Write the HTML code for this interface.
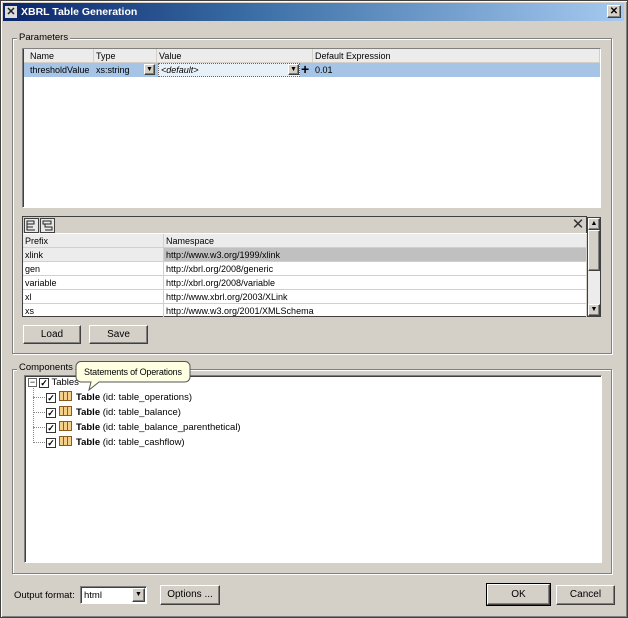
<!DOCTYPE html>
<html><head><style>
*{box-sizing:border-box;margin:0;padding:0}
body{width:628px;height:618px;background:#fff;font-family:"Liberation Sans",Arial,sans-serif;font-size:10px;color:#000;position:relative;overflow:hidden}
.a{position:absolute}
.win{left:0;top:0;width:628px;height:618px;background:#d4d0c8;border:1px solid #404040;box-shadow:inset 1px 1px #fff,inset -1px -1px #808080}
.title{left:3px;top:3px;width:621px;height:18px;background:linear-gradient(90deg,#0a246a,#3a6ea5 40%,#a6caf0);color:#fff;font-weight:bold;font-size:10.5px;line-height:18px;padding-left:18px}
.grp{border:1px solid #808080;box-shadow:1px 1px #fff,inset 1px 1px #fff}
.lbl{background:#d4d0c8;padding:0 2px;font-size:9.5px}
.sunk{background:#fff;border:1px solid;border-color:#808080 #fff #fff #808080;box-shadow:inset 1px 1px #404040}
.btn{background:#d4d0c8;border:1px solid;border-color:#fff #404040 #404040 #fff;box-shadow:inset -1px -1px #808080;text-align:center;font-size:10px}
.cell{position:absolute;height:14px;line-height:14px;padding-left:2px;white-space:nowrap;font-size:9px;border-right:1px solid #d4d0c8;border-bottom:1px solid #d4d0c8}
.hdr{background:#ececec}
.tr{position:absolute;left:0;font-size:9.5px;white-space:nowrap;line-height:12px}
.cb{display:inline-block;width:10px;height:10px;border:1px solid #333;background:#fff;vertical-align:-1px;font-size:9px;line-height:8px;text-align:center;font-weight:bold}
.tbl{display:inline-block;width:13px;height:10px;border:1px solid #8a5a20;background:repeating-linear-gradient(90deg,#f4d08a 0 3px,#8a5a20 3px 4px);vertical-align:-1px;margin:0 4px 0 3px}
</style></head><body>
<div class="a win"></div>
<div class="a title">XBRL Table Generation</div>
<div class="a" style="left:5px;top:6px;width:12px;height:12px;background:#ddd;color:#222;font-size:11px;font-weight:bold;line-height:12px;text-align:center">✕</div>
<div class="a btn" style="left:607px;top:5px;width:14px;height:13px;line-height:11px;font-weight:bold;font-size:10px">✕</div>

<div class="a grp" style="left:12px;top:38px;width:600px;height:316px"></div>
<div class="a lbl" style="left:17px;top:32px">Parameters</div>
<div class="a sunk" style="left:22px;top:48px;width:579px;height:160px"></div>
<div class="a" style="left:24px;top:50px;width:576px;height:13px;background:#ececec"></div>
<div class="a" style="left:24px;top:63px;width:576px;height:14px;background:#a6c4e6"></div>
<div class="cell hdr" style="left:24px;top:49px;width:70px;padding-left:6px">Name</div>
<div class="cell hdr" style="left:94px;top:49px;width:63px">Type</div>
<div class="cell hdr" style="left:157px;top:49px;width:156px">Value</div>
<div class="cell hdr" style="left:313px;top:49px;width:287px">Default Expression</div>
<div class="cell" style="left:24px;top:63px;width:70px;border:0;padding-left:6px">thresholdValue</div>
<div class="cell" style="left:94px;top:63px;width:63px;border:0">xs:string</div>
<div class="a btn" style="left:144px;top:64px;width:11px;height:11px;font-size:7px;line-height:9px">▼</div>
<div class="a" style="left:158px;top:63px;width:142px;height:14px;background:#e8f0f8;border:1px dotted #666;font-size:9px;font-style:italic;line-height:12px;padding-left:2px">&lt;default&gt;</div>
<div class="a btn" style="left:288px;top:64px;width:11px;height:11px;font-size:7px;line-height:9px">▼</div>
<div class="a" style="left:301px;top:62px;font-size:14px;font-weight:bold;line-height:14px">+</div>
<div class="cell" style="left:313px;top:63px;border:0">0.01</div>

<div class="a" style="left:22px;top:216px;width:565px;height:18px;border:1px solid #404040;background:#d4d0c8"></div>
<svg class="a" style="left:24px;top:218px" width="32" height="15"><rect x=".5" y=".5" width="14" height="14" fill="#e8e8e8" stroke="#404040"/><rect x="16.5" y=".5" width="14" height="14" fill="#e8e8e8" stroke="#404040"/><path d="M3 3h7v3H3zM3 6v6h8M3 9h6" fill="none" stroke="#222"/><path d="M19 3h8v3h-8zM21 6v3h7v3h-7" fill="none" stroke="#222"/></svg>
<div class="a" style="left:570px;top:217px;width:16px;height:16px;font-size:15px;line-height:16px;text-align:center;color:#333">✕</div>
<div class="a" style="left:22px;top:233px;width:565px;height:84px;background:#fff;border-left:1px solid #404040;border-bottom:1px solid #404040"></div>
<div class="cell hdr" style="left:23px;top:234px;width:141px">Prefix</div>
<div class="cell hdr" style="left:164px;top:234px;width:423px">Namespace</div>
<div class="cell" style="left:23px;top:248px;width:141px;background:#ececec">xlink</div>
<div class="cell" style="left:164px;top:248px;width:423px;background:#c0c0c0">http://www.w3.org/1999/xlink</div>
<div class="cell" style="left:23px;top:262px;width:141px">gen</div>
<div class="cell" style="left:164px;top:262px;width:423px">http://xbrl.org/2008/generic</div>
<div class="cell" style="left:23px;top:276px;width:141px">variable</div>
<div class="cell" style="left:164px;top:276px;width:423px">http://xbrl.org/2008/variable</div>
<div class="cell" style="left:23px;top:290px;width:141px">xl</div>
<div class="cell" style="left:164px;top:290px;width:423px">http://www.xbrl.org/2003/XLink</div>
<div class="cell" style="left:23px;top:304px;width:141px">xs</div>
<div class="cell" style="left:164px;top:304px;width:423px">http://www.w3.org/2001/XMLSchema</div>
<div class="a" style="left:587px;top:217px;width:14px;height:100px;background:#ececec;border:1px solid #404040"></div>
<div class="a btn" style="left:588px;top:218px;width:12px;height:12px;font-size:7px;line-height:10px">▲</div>
<div class="a btn" style="left:588px;top:230px;width:12px;height:41px"></div>
<div class="a btn" style="left:588px;top:304px;width:12px;height:12px;font-size:7px;line-height:10px">▼</div>
<div class="a btn" style="left:23px;top:325px;width:58px;height:19px;line-height:17px">Load</div>
<div class="a btn" style="left:89px;top:325px;width:59px;height:19px;line-height:17px">Save</div>

<div class="a grp" style="left:12px;top:369px;width:600px;height:205px"></div>
<div class="a lbl" style="left:17px;top:362px">Components</div>
<div class="a sunk" style="left:24px;top:375px;width:578px;height:188px"></div>
<div class="a" style="left:33px;top:388px;height:55px;border-left:1px dotted #888"></div>
<div class="a" style="left:33px;top:397px;width:12px;border-top:1px dotted #888"></div>
<div class="a" style="left:33px;top:412px;width:12px;border-top:1px dotted #888"></div>
<div class="a" style="left:33px;top:427px;width:12px;border-top:1px dotted #888"></div>
<div class="a" style="left:33px;top:442px;width:12px;border-top:1px dotted #888"></div>
<div class="a" style="left:28px;top:378px;width:9px;height:9px;border:1px solid #666;background:#fff;font-size:9px;line-height:6px;text-align:center">−</div>
<div class="tr" style="left:39px;top:377px"><span class="cb">✓</span> Tables</div>
<div class="tr" style="left:46px;top:391px"><span class="cb">✓</span><span class="tbl"></span><b>Table</b> (id: table_operations)</div>
<div class="tr" style="left:46px;top:406px"><span class="cb">✓</span><span class="tbl"></span><b>Table</b> (id: table_balance)</div>
<div class="tr" style="left:46px;top:421px"><span class="cb">✓</span><span class="tbl"></span><b>Table</b> (id: table_balance_parenthetical)</div>
<div class="tr" style="left:46px;top:436px"><span class="cb">✓</span><span class="tbl"></span><b>Table</b> (id: table_cashflow)</div>
<svg class="a" style="left:75px;top:361px" width="120" height="30"><path d="M6 .5H110a5 5 0 0 1 5 5V16a5 5 0 0 1-5 5H24L14 29 16 21H6a5 5 0 0 1-5-5V5.5a5 5 0 0 1 5-5z" fill="#ffffe1" stroke="#555"/><text x="9" y="14" font-family="Liberation Sans" font-size="9" textLength="98">Statements of Operations</text></svg>

<div class="a" style="left:14px;top:590px;font-size:9.5px">Output format:</div>
<div class="a sunk" style="left:80px;top:586px;width:67px;height:18px;padding:3px 3px;font-size:9.5px">html</div>
<div class="a btn" style="left:132px;top:588px;width:13px;height:14px;font-size:7px;line-height:12px">▼</div>
<div class="a btn" style="left:160px;top:585px;width:60px;height:20px;line-height:18px">Options ...</div>
<div class="a btn" style="left:487px;top:584px;width:63px;height:21px;line-height:19px;outline:1px solid #000">OK</div>
<div class="a btn" style="left:556px;top:585px;width:59px;height:20px;line-height:18px">Cancel</div>
</body></html>
